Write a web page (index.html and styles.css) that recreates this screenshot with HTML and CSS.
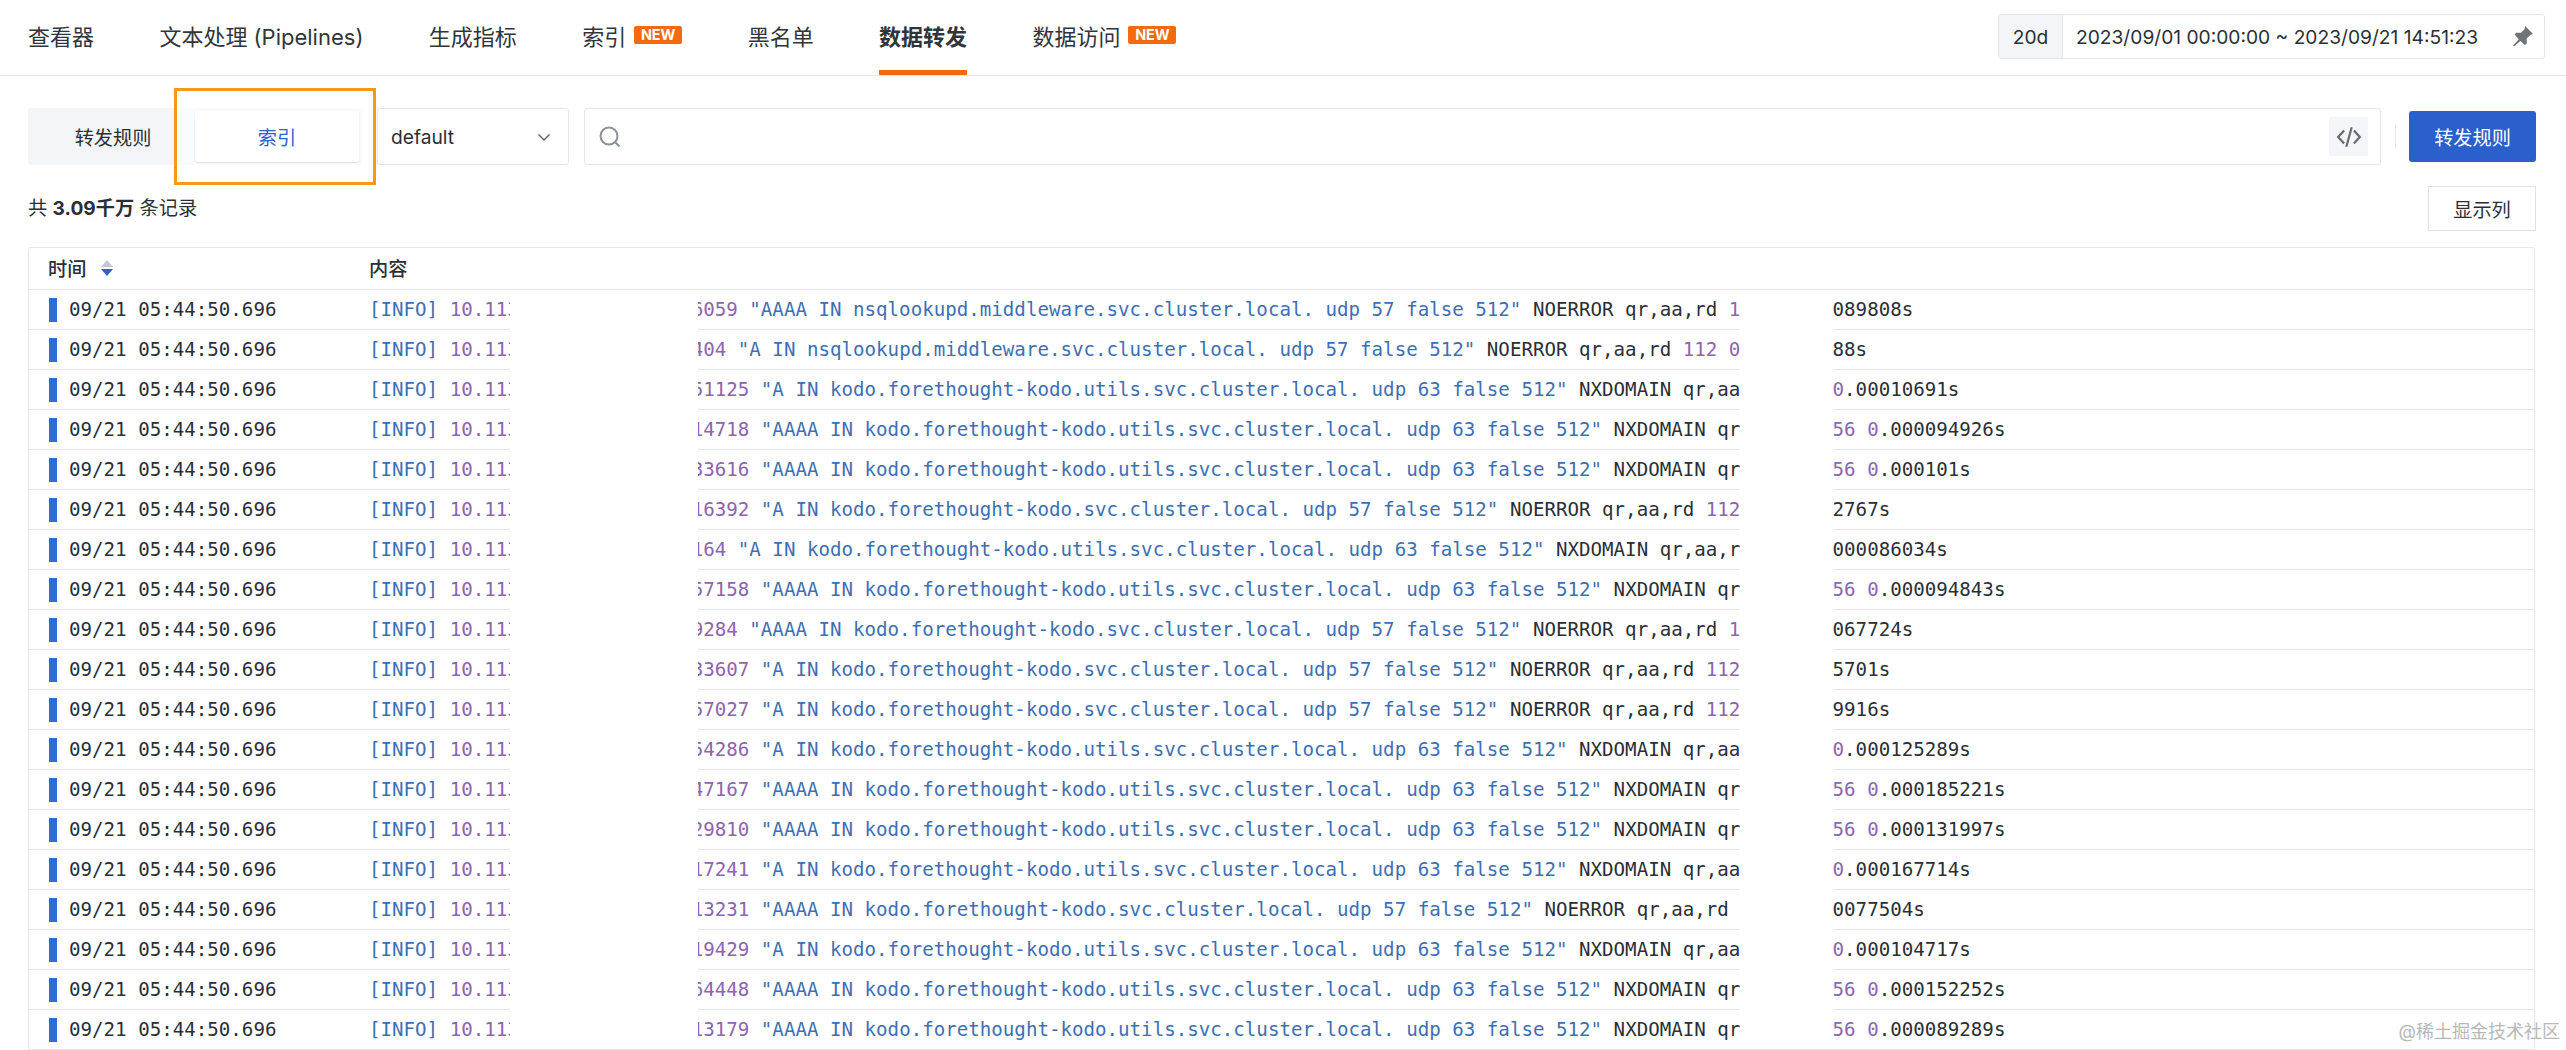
FILE: index.html
```html
<!DOCTYPE html>
<html lang="zh">
<head>
<meta charset="utf-8">
<title>数据转发</title>
<link rel="stylesheet" href="styles.css">
</head>
<body>
<header class="nav">
  <div class="tabs">
    <span class="tab">查看器</span>
    <span class="tab">文本处理 (Pipelines)</span>
    <span class="tab">生成指标</span>
    <span class="tab">索引<em class="new">NEW</em></span>
    <span class="tab">黑名单</span>
    <span class="tab active">数据转发</span>
    <span class="tab">数据访问<em class="new">NEW</em></span>
  </div>
  <div class="range">
    <span class="range-tag">20d</span>
    <span class="range-text">2023/09/01 00:00:00 ~ 2023/09/21 14:51:23</span>
    <svg class="pin" viewBox="0 0 20 20"><path d="M12.5 0 20 7.5 17.5 8.5 14 12 14 17 12 18 8 14 2 19.5 1 18.5 6.5 12.5 2.5 8 4 6.5 8.5 6.5 12 3Z"/></svg>
  </div>
</header>
<section class="toolbar">
  <div class="segment">
    <span class="seg-item">转发规则</span>
    <span class="seg-item on">索引</span>
  </div>
  <div class="select">
    <span>default</span>
    <svg class="chev" viewBox="0 0 14 14"><path d="M1.5 4.5 7 10 12.5 4.5"/></svg>
  </div>
  <div class="search">
    <svg class="glass" viewBox="0 0 24 24"><circle cx="11" cy="11" r="8.5"/><path d="M17.5 17.5 21.5 21.5"/></svg>
    <span class="code"><svg viewBox="0 0 24 24"><path d="M7.5 6 2 12 7.5 18M16.5 6 22 12 16.5 18M14.5 3 9.5 21"/></svg></span>
  </div>
  <i class="divider"></i>
  <button class="primary">转发规则</button>
  <i class="mark"></i>
</section>
<section class="meta">
  <span class="count">共 <b>3.09千万</b> 条记录</span>
  <button class="cols">显示列</button>
</section>
<main class="table">
  <div class="head">
    <span class="h-time">时间<svg class="sort" viewBox="0 0 12 16"><path class="up" d="M6 0 12 7H0Z"/><path class="down" d="M0 9H12L6 16Z"/></svg></span>
    <span class="h-body">内容</span>
  </div>
  <div class="row"><i class="bar"></i><span class="time">09/21 05:44:50.696</span><span class="log"><span class="t">[INFO]</span> <span class="p">10.113.12.34:56789 - 6059</span> <span class="t">"AAAA IN nsqlookupd.middleware.svc.cluster.local. udp 57 false 512"</span> NOERROR qr,aa,rd <span class="p">112 0</span>.000089808s</span></div>
  <div class="row"><i class="bar"></i><span class="time">09/21 05:44:50.696</span><span class="log"><span class="t">[INFO]</span> <span class="p">10.113.12.34:56789 - 404</span> <span class="t">"A IN nsqlookupd.middleware.svc.cluster.local. udp 57 false 512"</span> NOERROR qr,aa,rd <span class="p">112 0</span>.000074388s</span></div>
  <div class="row"><i class="bar"></i><span class="time">09/21 05:44:50.696</span><span class="log"><span class="t">[INFO]</span> <span class="p">10.113.12.34:56789 - 51125</span> <span class="t">"A IN kodo.forethought-kodo.utils.svc.cluster.local. udp 63 false 512"</span> NXDOMAIN qr,aa,rd <span class="p">161 0</span>.00010691s</span></div>
  <div class="row"><i class="bar"></i><span class="time">09/21 05:44:50.696</span><span class="log"><span class="t">[INFO]</span> <span class="p">10.113.12.34:56789 - 14718</span> <span class="t">"AAAA IN kodo.forethought-kodo.utils.svc.cluster.local. udp 63 false 512"</span> NXDOMAIN qr,aa,rd <span class="p">156 0</span>.000094926s</span></div>
  <div class="row"><i class="bar"></i><span class="time">09/21 05:44:50.696</span><span class="log"><span class="t">[INFO]</span> <span class="p">10.113.12.34:56789 - 33616</span> <span class="t">"AAAA IN kodo.forethought-kodo.utils.svc.cluster.local. udp 63 false 512"</span> NXDOMAIN qr,aa,rd <span class="p">156 0</span>.000101s</span></div>
  <div class="row"><i class="bar"></i><span class="time">09/21 05:44:50.696</span><span class="log"><span class="t">[INFO]</span> <span class="p">10.113.12.34:56789 - 16392</span> <span class="t">"A IN kodo.forethought-kodo.svc.cluster.local. udp 57 false 512"</span> NOERROR qr,aa,rd <span class="p">112 0</span>.000152767s</span></div>
  <div class="row"><i class="bar"></i><span class="time">09/21 05:44:50.696</span><span class="log"><span class="t">[INFO]</span> <span class="p">10.113.12.34:56789 - 164</span> <span class="t">"A IN kodo.forethought-kodo.utils.svc.cluster.local. udp 63 false 512"</span> NXDOMAIN qr,aa,rd <span class="p">161 0</span>.000086034s</span></div>
  <div class="row"><i class="bar"></i><span class="time">09/21 05:44:50.696</span><span class="log"><span class="t">[INFO]</span> <span class="p">10.113.12.34:56789 - 57158</span> <span class="t">"AAAA IN kodo.forethought-kodo.utils.svc.cluster.local. udp 63 false 512"</span> NXDOMAIN qr,aa,rd <span class="p">156 0</span>.000094843s</span></div>
  <div class="row"><i class="bar"></i><span class="time">09/21 05:44:50.696</span><span class="log"><span class="t">[INFO]</span> <span class="p">10.113.12.34:56789 - 9284</span> <span class="t">"AAAA IN kodo.forethought-kodo.svc.cluster.local. udp 57 false 512"</span> NOERROR qr,aa,rd <span class="p">112 0</span>.000067724s</span></div>
  <div class="row"><i class="bar"></i><span class="time">09/21 05:44:50.696</span><span class="log"><span class="t">[INFO]</span> <span class="p">10.113.12.34:56789 - 33607</span> <span class="t">"A IN kodo.forethought-kodo.svc.cluster.local. udp 57 false 512"</span> NOERROR qr,aa,rd <span class="p">112 0</span>.000095701s</span></div>
  <div class="row"><i class="bar"></i><span class="time">09/21 05:44:50.696</span><span class="log"><span class="t">[INFO]</span> <span class="p">10.113.12.34:56789 - 57027</span> <span class="t">"A IN kodo.forethought-kodo.svc.cluster.local. udp 57 false 512"</span> NOERROR qr,aa,rd <span class="p">112 0</span>.000079916s</span></div>
  <div class="row"><i class="bar"></i><span class="time">09/21 05:44:50.696</span><span class="log"><span class="t">[INFO]</span> <span class="p">10.113.12.34:56789 - 54286</span> <span class="t">"A IN kodo.forethought-kodo.utils.svc.cluster.local. udp 63 false 512"</span> NXDOMAIN qr,aa,rd <span class="p">161 0</span>.000125289s</span></div>
  <div class="row"><i class="bar"></i><span class="time">09/21 05:44:50.696</span><span class="log"><span class="t">[INFO]</span> <span class="p">10.113.12.34:56789 - 47167</span> <span class="t">"AAAA IN kodo.forethought-kodo.utils.svc.cluster.local. udp 63 false 512"</span> NXDOMAIN qr,aa,rd <span class="p">156 0</span>.000185221s</span></div>
  <div class="row"><i class="bar"></i><span class="time">09/21 05:44:50.696</span><span class="log"><span class="t">[INFO]</span> <span class="p">10.113.12.34:56789 - 29810</span> <span class="t">"AAAA IN kodo.forethought-kodo.utils.svc.cluster.local. udp 63 false 512"</span> NXDOMAIN qr,aa,rd <span class="p">156 0</span>.000131997s</span></div>
  <div class="row"><i class="bar"></i><span class="time">09/21 05:44:50.696</span><span class="log"><span class="t">[INFO]</span> <span class="p">10.113.12.34:56789 - 17241</span> <span class="t">"A IN kodo.forethought-kodo.utils.svc.cluster.local. udp 63 false 512"</span> NXDOMAIN qr,aa,rd <span class="p">161 0</span>.000167714s</span></div>
  <div class="row"><i class="bar"></i><span class="time">09/21 05:44:50.696</span><span class="log"><span class="t">[INFO]</span> <span class="p">10.113.12.34:56789 - 13231</span> <span class="t">"AAAA IN kodo.forethought-kodo.svc.cluster.local. udp 57 false 512"</span> NOERROR qr,aa,rd <span class="p">112 0</span>.000077504s</span></div>
  <div class="row"><i class="bar"></i><span class="time">09/21 05:44:50.696</span><span class="log"><span class="t">[INFO]</span> <span class="p">10.113.12.34:56789 - 19429</span> <span class="t">"A IN kodo.forethought-kodo.utils.svc.cluster.local. udp 63 false 512"</span> NXDOMAIN qr,aa,rd <span class="p">161 0</span>.000104717s</span></div>
  <div class="row"><i class="bar"></i><span class="time">09/21 05:44:50.696</span><span class="log"><span class="t">[INFO]</span> <span class="p">10.113.12.34:56789 - 64448</span> <span class="t">"AAAA IN kodo.forethought-kodo.utils.svc.cluster.local. udp 63 false 512"</span> NXDOMAIN qr,aa,rd <span class="p">156 0</span>.000152252s</span></div>
  <div class="row"><i class="bar"></i><span class="time">09/21 05:44:50.696</span><span class="log"><span class="t">[INFO]</span> <span class="p">10.113.12.34:56789 - 13179</span> <span class="t">"AAAA IN kodo.forethought-kodo.utils.svc.cluster.local. udp 63 false 512"</span> NXDOMAIN qr,aa,rd <span class="p">156 0</span>.000089289s</span></div>
  <i class="mask mask-a"></i>
  <i class="mask mask-b"></i>
</main>
<div class="watermark">@稀土掘金技术社区</div>
</body>
</html>
```
FILE: styles.css
```css
* { box-sizing: border-box; }
html, body { margin: 0; height: 1050px; overflow: hidden; background: #fff; }
body {
  position: relative;
  width: 2566px;
  font-family: Inter, "Noto Sans CJK SC", sans-serif;
  font-size: 19.2px;
  color: #2a2f36;
}
i, em { font-style: normal; }

.nav {
  height: 76px;
  padding: 14px 21px 0 28px;
  display: flex;
  justify-content: space-between;
  align-items: flex-start;
  border-bottom: 1px solid #e4e6ea;
}
.tabs { display: flex; gap: 65.4px; margin-top: -14px; }
.tab {
  height: 75px;
  display: flex;
  align-items: center;
  font-size: 22px;
  color: #30353c;
  padding-bottom: 5px;
}
.tab.active { font-weight: 700; box-shadow: inset 0 -5px 0 #f5690f; }
.new {
  margin-left: 8px;
  width: 48px;
  height: 18px;
  border-radius: 2px;
  background: #f5690f;
  color: #fff;
  font-size: 14.4px;
  font-weight: 700;
  line-height: 18px;
  text-align: center;
}
.range {
  width: 547px;
  height: 45px;
  display: flex;
  align-items: center;
  border: 1px solid #e4e6ea;
  border-radius: 3px;
}
.range-tag {
  width: 64px;
  height: 100%;
  background: #f3f5f8;
  border-right: 1px solid #e4e6ea;
  display: flex;
  align-items: center;
  justify-content: center;
}
.range-text { margin-left: 13px; white-space: nowrap; }
.pin { width: 21px; height: 21px; margin-left: auto; margin-right: 11px; fill: #6e7378; }

.toolbar {
  position: relative;
  height: 57px;
  margin-top: 32px;
  padding: 0 30px 0 28px;
  display: flex;
  align-items: center;
}
.segment {
  width: 334px;
  height: 57px;
  padding: 3px;
  background: linear-gradient(90deg, #f3f5f8 146px, #fafbfc 146px);
  border-radius: 3px;
  display: flex;
  justify-content: space-between;
}
.seg-item {
  width: 164px;
  display: flex;
  align-items: center;
  justify-content: center;
}
.seg-item.on {
  background: #fff;
  color: #2f62c9;
  border-radius: 3px;
  box-shadow: 0 1px 2px rgba(0,0,0,.12);
}
.select {
  width: 192px;
  height: 57px;
  margin-left: 15px;
  padding: 0 17px 0 13px;
  display: flex;
  align-items: center;
  justify-content: space-between;
  border: 1px solid #e4e6ea;
  border-radius: 3px;
}
.chev { width: 14px; height: 14px; fill: none; stroke: #61666d; stroke-width: 1.5; }
.search {
  width: 1797px;
  height: 57px;
  margin-left: 15px;
  padding: 0 12px 0 13px;
  display: flex;
  align-items: center;
  justify-content: space-between;
  border: 1px solid #e4e6ea;
  border-radius: 3px;
}
.glass { width: 24px; height: 24px; fill: none; stroke: #8b9097; stroke-width: 2; }
.code {
  width: 39px;
  height: 39px;
  background: #f3f5f8;
  border-radius: 2px;
  display: flex;
  align-items: center;
  justify-content: center;
}
.code svg { width: 26px; height: 26px; fill: none; stroke: #666b72; stroke-width: 2; }
.divider { width: 1px; height: 24px; margin-left: 14px; background: #e9ebee; }
.primary {
  width: 127px;
  height: 51px;
  margin-left: 13px;
  border: 0;
  border-radius: 3px;
  background: #2b5fcc;
  color: #fff;
  font: inherit;
}
.mark {
  position: absolute;
  left: 174px;
  top: -20px;
  width: 202px;
  height: 97px;
  border: 3px solid #f59a16;
  pointer-events: none;
}

.meta {
  height: 45px;
  margin-top: 21px;
  padding: 0 30px 0 28px;
  display: flex;
  align-items: center;
  justify-content: space-between;
}
.count { padding-bottom: 3px; }
.meta b { font-weight: 700; }
.cols {
  width: 108px;
  height: 45px;
  background: #fff;
  border: 1px solid #dfe2e6;
  color: inherit;
  font: inherit;
  padding: 0;
}

.table {
  position: relative;
  width: 2507px;
  height: 803px;
  margin: 16px 0 0 28px;
  border: 1px solid #e4e6ea;
  border-radius: 3px 3px 0 0;
}
.head {
  height: 42px;
  padding-bottom: 2px;
  display: flex;
  align-items: center;
  font-weight: 500;
  border-bottom: 1px solid #e4e6ea;
}
.h-time { width: 340px; padding-left: 19px; display: flex; align-items: center; }
.sort { width: 12px; height: 16px; margin-left: 15px; }
.sort .up { fill: #c5c9cf; }
.sort .down { fill: #2f62c9; }
.row {
  height: 40px;
  display: flex;
  align-items: center;
  border-bottom: 1px solid #e4e6ea;
  white-space: nowrap;
  overflow: hidden;
  font-family: "DejaVu Sans Mono", "Liberation Mono", monospace;
  font-size: 19.15px;
  color: #2a2f36;
}
.bar { flex: none; width: 8px; height: 24px; margin-left: 20px; background: #2f6bd6; }
.time { flex: none; width: 300px; margin-left: 12px; }
.t { color: #3d6fb5; }
.p { color: #8e63b0; }
.mask { position: absolute; background: #fff; top: 42px; bottom: 0; }
.mask-a { left: 481px; width: 188px; }
.mask-b { left: 1711px; width: 93px; }

.watermark {
  position: absolute;
  right: 6px;
  bottom: 7px;
  font-size: 18px;
  color: #b8b8b8;
  white-space: nowrap;
}
```
